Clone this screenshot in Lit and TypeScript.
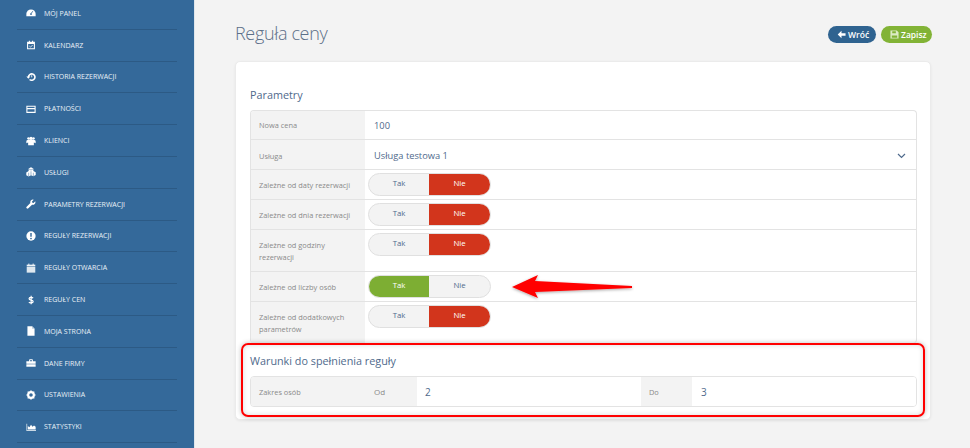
import { LitElement, html, css, svg } from "lit";
import { customElement } from "lit/decorators.js";

const W = "#fff";
const B = "#34699a";
const icons: Record<string, unknown> = {
  panel: svg`<path d="M.5 11.500V8a6.500 6 0 0 1 13 0v3.500z" fill="${W}"/><path d="M7 8l2.500-3.500" stroke="${B}" stroke-width="1.200"/><circle cx="7" cy="8.500" r="1.300" fill="${B}"/>`,
  cal: svg`<path fill-rule="evenodd" d="M1.500 2.500h2.500V1h1.500v1.500h3V1H10v1.500h2.500V13h-11zM3 5.500V11.500h8V5.500z" fill="${W}"/><path d="M4.700 8.500l1.600 1.500L9.300 7" stroke="${W}" stroke-width="1.100" fill="none"/>`,
  hist: svg`<path d="M3.500 7a4.500 4.500 0 1 1 1.500 3.500" stroke="${W}" stroke-width="2.200" fill="none"/><path d="M.5 6.300h5.500L3.300 9.500z" fill="${W}"/><path d="M8 4.500V7.500" stroke="${W}" stroke-width="1.200"/>`,
  card: svg`<path fill-rule="evenodd" d="M.5 2.500h13v10H.5zM2 7.500V11h10V7.500zM2 4v1.500h10V4z" fill="${W}"/>`,
  users: svg`<path d="M3 5h8l2.500 1.500V10L11 9v4H3V9L.5 10V6.500z" fill="${W}"/><circle cx="3.500" cy="3.300" r="1.700" fill="${W}"/><circle cx="10.500" cy="3.300" r="1.700" fill="${W}"/><circle cx="7" cy="3.300" r="2.200" fill="${W}"/>`,
  cubes: svg`<path d="M7 .5l3.300 1.700v3.500l3.300 1.700v3.800l-3.300 1.700L7 11.500l-3.300 1.700L.4 11.500V7.700l3.300-2V2.200z" fill="${W}"/><path d="M7 6v5.500M3.700 8v5M10.300 8v5M3.700 2.500L7 4.200l3.300-1.700" stroke="${B}" stroke-width=".7" fill="none"/>`,
  wrench: svg`<path d="M13 3.200l-2.400 2.400-1.700-.5-.5-1.700L10.800 1a3.700 3.700 0 0 0-4.700 4.500L.9 10.700a1.700 1.700 0 0 0 2.400 2.400l5.200-5.200A3.700 3.700 0 0 0 13 3.200z" fill="${W}"/>`,
  alert: svg`<circle cx="7" cy="7" r="6.500" fill="${W}"/><path d="M7 2.800v5.400" stroke="${B}" stroke-width="2"/><circle cx="7" cy="10.500" r="1.200" fill="${B}"/>`,
  calendar: svg`<path d="M1 5.500h12V13.500H1z" fill="#dfe8ef"/><path d="M1 2.300h12v2.500H1z" fill="#eef3f7"/><path d="M4 .8v2.500M10 .8v2.500" stroke="${W}" stroke-width="1.300"/>`,
  dollar: svg`<path d="M10 4.300C9 3.300 4.300 2.600 4.300 5.200c0 2.800 5.700 1.300 5.700 4 0 2.700-4.800 2.100-6 1M7.200 1v12" stroke="${W}" stroke-width="1.700" fill="none"/>`,
  file: svg`<path d="M2 .5h6.500L12 4v9.500H2z" fill="${W}"/><path d="M8.500 .5V4H12z" fill="#b9cbd9"/>`,
  brief: svg`<path fill-rule="evenodd" d="M.5 4.500h3.800V3a1.200 1.200 0 0 1 1.200-1.200h3A1.200 1.200 0 0 1 9.700 3v1.500h3.800V8H.5zM5.500 3v1.500h3V3z" fill="${W}"/><path d="M.5 8.800h13v3.400H.5z" fill="${W}"/>`,
  gear: svg`<circle cx="7" cy="7" r="4" fill="none" stroke="${W}" stroke-width="3"/><path d="M7 .5v2.500M7 11v2.500M.5 7H3M11 7h2.500M2.400 2.400l1.800 1.800M9.800 9.800l1.800 1.800M2.400 11.600l1.800-1.800M9.800 4.200l1.800-1.800" stroke="${W}" stroke-width="1.500"/>`,
  chart: svg`<path d="M.5 2.500V12.500H14v-1.200H1.700V2.500z" fill="#c9d8e4"/><path d="M2.500 10.500V5.500l2.300 1.800L7 3.800l2.200 3 2-2 2.300 2v3.700z" fill="${W}"/>`,
};

const menu: [string, string][] = [
  ["MÓJ PANEL", "panel"], ["KALENDARZ", "cal"], ["HISTORIA REZERWACJI", "hist"], ["PŁATNOŚCI", "card"],
  ["KLIENCI", "users"], ["USŁUGI", "cubes"], ["PARAMETRY REZERWACJI", "wrench"], ["REGUŁY REZERWACJI", "alert"],
  ["REGUŁY OTWARCIA", "calendar"], ["REGUŁY CEN", "dollar"], ["MOJA STRONA", "file"], ["DANE FIRMY", "brief"],
  ["USTAWIENIA", "gear"], ["STATYSTYKI", "chart"],
];

@customElement("app-root")
export class AppRoot extends LitElement {
  static styles = css`
    :host { display: block; width: 970px; height: 448px; overflow: hidden; position: relative; background: #f3f3f3; font-family: "Open Sans", sans-serif; }
    .page { display: flex; height: 448px; }
    .side { width: 194px; flex: none; background: #34699a; border-right: 1px solid #dfe6ec; margin-top: -2px; }
    .item { height: 30.8px; margin: 0 17px; padding-left: 9px; display: flex; align-items: center; gap: 8px; border-bottom: 1px solid #2c5a85; color: #eaf1f7; font-size: 7px; white-space: nowrap; }
    .item svg { width: 10px; height: 10px; flex: none; }
    .main { flex: 1; padding: 0 38px 0 40px; min-width: 0; }
    .head { display: flex; justify-content: space-between; align-items: center; height: 61px; padding-top: 8px; box-sizing: border-box; }
    h1 { margin: 0 0 4px; font-size: 18px; font-weight: 300; letter-spacing: -.35px; color: #5c6f88; line-height: 1; }
    .btns { display: flex; gap: 5px; }
    .btn { height: 17px; border-radius: 9px; display: flex; align-items: center; gap: 2px; padding: 0 0 0 9px; color: #fff; font-size: 8.500px; font-weight: 600; box-sizing: border-box; }
    .btn svg { width: 9px; height: 9px; flex: none; }
    .back { background: #2f6390; width: 48px; }
    .save { background: #82b336; width: 51px; }
    .card { width: 696px; height: 359px; box-sizing: border-box; background: #fff; border-radius: 5px; border: 1px solid #ebebeb; box-shadow: 0 1px 3px rgba(0,0,0,.06); padding: 25px 13px 0 14px; }
    h2 { margin: 0; font-size: 10.800px; font-weight: 400; color: #4f6a8c; line-height: 16px; }
    .params { margin-top: 7px; }
    .tbl { border: 1px solid #e3e3e3; border-radius: 4px; overflow: hidden; border-bottom: none; }
    .row { display: flex; border-bottom: 1px solid #e3e3e3; }
    .row.last { border-bottom: none; }
    .lab { width: 114px; flex: none; box-sizing: border-box; background: #f3f3f3; color: #8a8a8a; font-size: 7.400px; line-height: 12px; padding: 0 8px; display: flex; align-items: center; }
    .val { flex: 1; display: flex; align-items: center; padding-left: 9px; color: #4f6a8c; font-size: 9.300px; justify-content: space-between; padding-right: 10px; }
    .val svg { width: 9px; height: 6px; }
    .r29 { height: 28px; } .r30 { height: 29px; }
    .select .lab, .select .val { padding-top: 2px; }
    .tall { height: 41px; }
    .tall .lab { align-items: flex-start; padding-top: 9px; }
    .tall .val, .sw-row .val { align-items: flex-start; padding-left: 3px; padding-top: 3px; }
    .sw { width: 123px; height: 23px; box-sizing: border-box; border-radius: 12px; display: flex; overflow: hidden; border: 1px solid #e0e0e0; background: #f3f3f3; font-size: 7.800px; font-weight: 500; }
    .sw span { flex: none; width: 60px; display: flex; align-items: center; justify-content: center; color: #4f6a8c; padding-bottom: 3px; box-sizing: border-box; }
    .sw span + span { flex: 1; }
    .sw .no { background: #d2351c; color: #fff; }
    .sw .yes { background: #7dae33; color: #fff; }
    .h2b { margin-top: 10px; }
    .tbl2 { margin-top: 7px; border-bottom: 1px solid #e3e3e3; height: 31px; box-sizing: border-box; display: flex; }
    .c { background: #f3f3f3; color: #8a8a8a; font-size: 7.400px; display: flex; align-items: center; box-sizing: border-box; padding-left: 8px; }
    .c1 { width: 114px; } .c2 { width: 52px; font-size: 8px; padding-left: 9px; } .c3 { width: 224px; background: #fff; color: #4f6a8c; font-size: 10px; padding-left: 8px; }
    .c4 { width: 51px; } .c5 { flex: 1; background: #fff; color: #4f6a8c; font-size: 10px; padding-left: 9px; }
    .redbox { position: absolute; left: 241px; top: 343px; width: 684px; height: 74px; box-sizing: border-box; border: 2px solid #f00; border-radius: 7px; box-shadow: 0 0 5px rgba(0,0,0,.25), inset 0 0 5px rgba(0,0,0,.15); pointer-events: none; }
    .arrow { position: absolute; left: 505px; top: 268px; width: 130px; height: 36px; }
  `;

  private sw(on: boolean) {
    return on
      ? html`<div class="sw"><span class="yes">Tak</span><span>Nie</span></div>`
      : html`<div class="sw"><span>Tak</span><span class="no">Nie</span></div>`;
  }

  render() {
    return html`
      <div class="page">
        <nav class="side">
          ${menu.map(([t, i]) => html`<div class="item"><svg viewBox="0 0 14 14">${icons[i]}</svg><span>${t}</span></div>`)}
        </nav>
        <main class="main">
          <div class="head">
            <h1>Reguła ceny</h1>
            <div class="btns">
              <div class="btn back"><svg viewBox="0 0 10 10"><path d="M5 .8L.8 5 5 9.200V6.500h4.500v-3H5z" fill="#fff"/></svg>Wróć</div>
              <div class="btn save"><svg viewBox="0 0 10 10"><path fill-rule="evenodd" d="M.5.5h7l2 2v7h-9zM2.500 1.500v2h4v-2zM2 6v2.500h6V6z" fill="#dcebc4"/></svg>Zapisz</div>
            </div>
          </div>
          <section class="card">
            <h2>Parametry</h2>
            <div class="tbl params">
              <div class="row r29"><div class="lab">Nowa cena</div><div class="val">100</div></div>
              <div class="row r30 select"><div class="lab">Usługa</div><div class="val">Usługa testowa 1<svg viewBox="0 0 9 6"><path d="M1 1l3.500 3.500L8 1" stroke="#4f6a8c" stroke-width="1.200" fill="none"/></svg></div></div>
              <div class="row r30 sw-row"><div class="lab">Zależne od daty rezerwacji</div><div class="val">${this.sw(false)}</div></div>
              <div class="row r30 sw-row"><div class="lab">Zależne od dnia rezerwacji</div><div class="val">${this.sw(false)}</div></div>
              <div class="row tall"><div class="lab">Zależne od godziny rezerwacji</div><div class="val">${this.sw(false)}</div></div>
              <div class="row r30 sw-row"><div class="lab">Zależne od liczby osób</div><div class="val">${this.sw(true)}</div></div>
              <div class="row tall last"><div class="lab">Zależne od dodatkowych parametrów</div><div class="val">${this.sw(false)}</div></div>
            </div>
            <h2 class="h2b">Warunki do spełnienia reguły</h2>
            <div class="tbl tbl2">
              <div class="c c1">Zakres osób</div><div class="c c2">Od</div><div class="c c3">2</div><div class="c c4">Do</div><div class="c c5">3</div>
            </div>
          </section>
        </main>
      </div>
      <svg class="arrow" viewBox="0 0 130 36">
        <defs><filter id="s" x="-10%" y="-30%" width="120%" height="170%"><feDropShadow dx="0" dy="1" stdDeviation="1.500" flood-color="#000" flood-opacity=".35"/></filter></defs>
        <path d="M7 19L33 7l-3 6 97 5v2l-97 4 3 6z" fill="#f00" filter="url(#s)"/>
      </svg>
      <div class="redbox"></div>
    `;
  }
}
